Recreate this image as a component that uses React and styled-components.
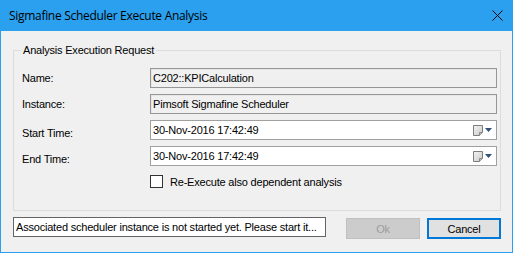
import React from "react";
import styled, { createGlobalStyle } from "styled-components";

const GlobalStyle = createGlobalStyle`
  html, body { margin: 0; padding: 0; background: #ffffff; }
  * { box-sizing: border-box; }
`;

const Window = styled.div`
  width: 513px;
  height: 253px;
  border: 1px solid #2aa0ee;
  border-top: none;
  background: #f0f0f0;
  display: flex;
  flex-direction: column;
  font-family: "Liberation Sans", Arial, sans-serif;
  font-size: 11px;
  letter-spacing: -0.2px;
  color: #000;
`;

const TitleBar = styled.div`
  height: 31px;
  flex: none;
  background: #2aa0ee;
  display: flex;
  align-items: center;
  justify-content: space-between;
  margin: 0 -1px;
  padding: 0 10px 1px 9px;
`;

const Title = styled.span`
  font-family: "Open Sans", "Noto Sans", sans-serif;
  font-size: 12px;
  letter-spacing: -0.3px;
  color: #000;
`;

const CloseButton = styled.div`
  width: 11px;
  height: 11px;
  display: flex;
`;

const Body = styled.div`
  flex: 1;
  padding: 19px 11px 0 12px;
  display: flex;
  flex-direction: column;
`;

const GroupBox = styled.div`
  position: relative;
  height: 161px;
  border: 1px solid #dcdcdc;
  padding: 17px 4px 0 8px;
`;

const Legend = styled.span`
  position: absolute;
  top: -7px;
  left: 7px;
  padding: 0 2px;
  background: #f0f0f0;
  line-height: 13px;
`;

const Form = styled.div`
  display: grid;
  grid-template-columns: 128px 347px;
  grid-auto-rows: 20px;
  row-gap: 6px;
`;

const Label = styled.div`
  display: flex;
  align-items: center;
  padding-top: ${(p) => (p.$low ? 5 : 0)}px;
`;

const Field = styled.div`
  display: flex;
  align-items: center;
  height: 20px;
  padding: 0 4px 0 2px;
  border: 1px solid ${(p) => (p.$readOnly ? "#969696" : "#a0a0a0")};
  box-shadow: inset 1px 1px 0 ${(p) => (p.$readOnly ? "#e6e6e6" : "#ffffff")};
  background: ${(p) => (p.$readOnly ? "#f0f0f0" : "#ffffff")};
  white-space: nowrap;
`;

const FieldText = styled.span`
  flex: 1;
`;

const PickerIcons = styled.div`
  display: flex;
  align-items: center;
  gap: 2px;
`;

const CheckRow = styled.label`
  display: flex;
  align-items: center;
  gap: 7px;
  margin: 9px 0 0 128px;
  height: 13px;
`;

const CheckBox = styled.span`
  width: 13px;
  height: 13px;
  border: 1px solid #333333;
  background: #ffffff;
  flex: none;
`;

const Footer = styled.div`
  display: flex;
  align-items: flex-start;
  margin-top: 6px;
`;

const Status = styled.div`
  width: 313px;
  height: 20px;
  border: 1px solid #646464;
  background: #ffffff;
  display: flex;
  align-items: center;
  padding-left: 2px;
  white-space: nowrap;
`;

const Button = styled.div`
  width: 74px;
  height: 21px;
  margin-top: 1px;
  margin-left: ${(p) => p.$gap}px;
  display: flex;
  align-items: center;
  justify-content: center;
  background: ${(p) => (p.$disabled ? "#cccccc" : "#e1e1e1")};
  color: ${(p) => (p.$disabled ? "#9d9d9d" : "#000000")};
  border: ${(p) => (p.$default ? "2px solid #0078d7" : "1px solid #bfbfbf")};
`;

const CalendarIcon = () => (
  <svg width="10" height="11" viewBox="0 0 10 11">
    <defs>
      <linearGradient id="cal" x1="0" y1="0" x2="1" y2="1">
        <stop offset="0" stopColor="#f4f4f4" />
        <stop offset="1" stopColor="#c9c9c9" />
      </linearGradient>
    </defs>
    <path d="M0.5 0.5 H9.5 V7.5 L6.5 10.5 H0.5 Z" fill="url(#cal)" stroke="#7d7d7d" />
    <path d="M6.5 10.5 V7.5 H9.5" fill="#bdbdbd" stroke="#8a8a8a" />
  </svg>
);

const DropArrow = () => (
  <svg width="7" height="4" viewBox="0 0 7 4">
    <path d="M0 0 H7 L3.5 4 Z" fill="#33507a" />
  </svg>
);

const CloseIcon = () => (
  <svg width="11" height="11" viewBox="0 0 11 11">
    <path d="M0.5 0.5 L10.5 10.5 M10.5 0.5 L0.5 10.5" stroke="#000" strokeWidth="1" />
  </svg>
);

const DateField = ({ value }) => (
  <Field>
    <FieldText>{value}</FieldText>
    <PickerIcons>
      <CalendarIcon />
      <DropArrow />
    </PickerIcons>
  </Field>
);

export default function App() {
  return (
    <>
      <GlobalStyle />
      <Window>
        <TitleBar>
          <Title>Sigmafine Scheduler Execute Analysis</Title>
          <CloseButton>
            <CloseIcon />
          </CloseButton>
        </TitleBar>
        <Body>
          <GroupBox>
            <Legend>Analysis Execution Request</Legend>
            <Form>
              <Label>Name:</Label>
              <Field $readOnly>C202::KPICalculation</Field>
              <Label>Instance:</Label>
              <Field $readOnly>Pimsoft Sigmafine Scheduler</Field>
              <Label $low>Start Time:</Label>
              <DateField value="30-Nov-2016 17:42:49" />
              <Label $low>End Time:</Label>
              <DateField value="30-Nov-2016 17:42:49" />
            </Form>
            <CheckRow>
              <CheckBox />
              <span>Re-Execute also dependent analysis</span>
            </CheckRow>
          </GroupBox>
          <Footer>
            <Status>Associated scheduler instance is not started yet. Please start it...</Status>
            <Button $disabled $gap={20}>Ok</Button>
            <Button $default $gap={7}>Cancel</Button>
          </Footer>
        </Body>
      </Window>
    </>
  );
}
